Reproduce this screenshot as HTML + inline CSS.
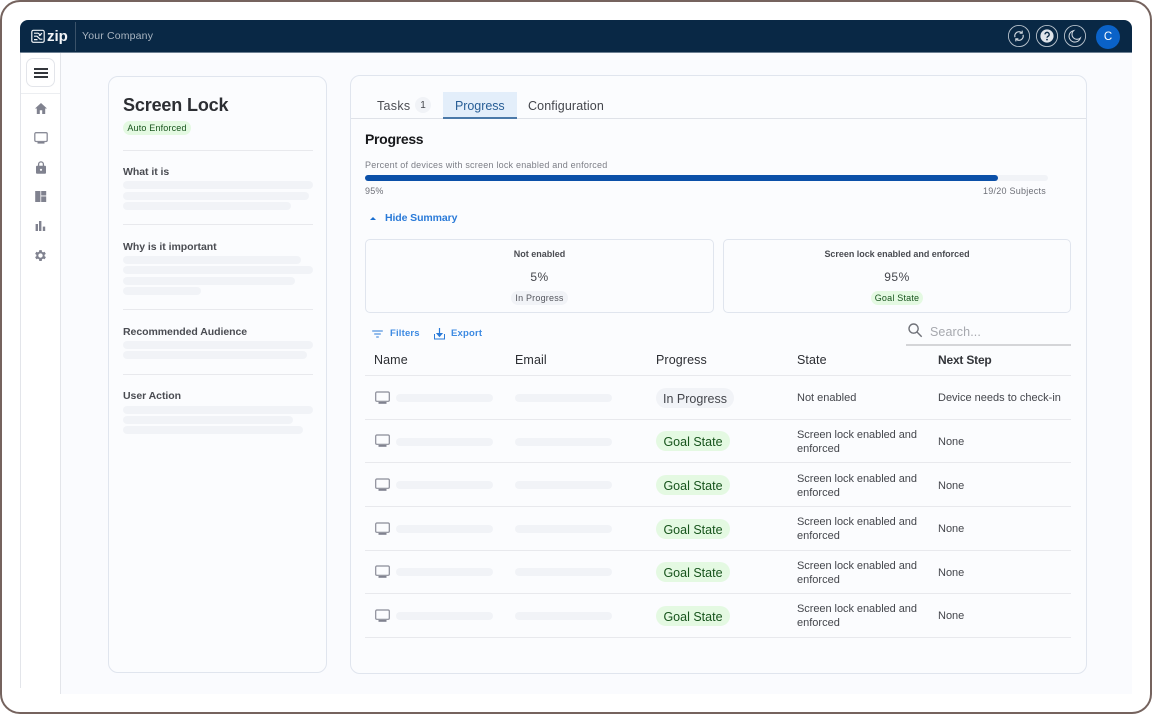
<!DOCTYPE html>
<html><head><meta charset="utf-8"><style>
*{box-sizing:border-box;margin:0;padding:0}
html,body{width:1152px;height:714px;overflow:hidden;background:#fff;font-family:"Liberation Sans",sans-serif}
div,span.t{position:absolute}
.t{position:absolute;white-space:nowrap;line-height:16px;height:16px}
.f{position:absolute;border:1px solid #e0e5ee;background:#fbfcfe}
.sk{position:absolute;height:8px;border-radius:4px;background:#f1f3f7}
.ln{position:absolute;height:1px;background:#e8e9ed}
.pill{position:absolute;border-radius:10px;text-align:center}
svg{position:absolute;display:block}
.cell{font-size:11px;color:#44464c;letter-spacing:0}
.cs{letter-spacing:-.05px}
.th{font-size:12.5px;color:#2c2e33;letter-spacing:.1px}
.gs{background:#e4f9e2;color:#17541c;font-size:12.5px;letter-spacing:0;left:656px;width:74px;height:20px;line-height:23px}
.lb{font-size:10.5px;font-weight:700;color:#4a4c52;letter-spacing:-.05px}
</style></head><body>
<div style="left:0;top:0;width:1152px;height:714px;border:2px solid #75635e;border-radius:20px;z-index:5"></div>
<div style="left:61px;top:52px;width:1071px;height:642px;background:#fafbfe"></div>
<div style="left:20px;top:53px;width:1px;height:635px;background:#e3e5ea"></div>
<div style="left:60px;top:53px;width:1px;height:641px;background:#e3e5ea"></div>
<div style="left:21px;top:93px;width:39px;height:1px;background:#eceef1"></div>

<div style="left:20px;top:20px;width:1112px;height:33px;background:#092845;border-radius:8px 8px 0 0;border-bottom:1px solid #6d8093"></div>
<svg style="left:31px;top:29px" width="14" height="15" viewBox="0 0 14 15" fill="none" stroke="#f2f5f8" stroke-width="1.2"><rect x=".8" y="1.3" width="12.4" height="12" rx="1.6"/><path d="M3 4.2h4l3 2.2M3 7.2h3l3 3h2.4M11 4.2 8 6.8M3 10.6h3.5"/></svg>
<span class="t" style="left:47px;top:29px;font-size:15px;font-weight:700;color:#f4f6f8;letter-spacing:0">zip</span>
<div style="left:75px;top:22px;width:1px;height:29px;background:#3a5269"></div>
<span class="t" style="left:82px;top:28px;font-size:10.5px;color:#a9b5c1;letter-spacing:.17px">Your Company</span>

<svg style="left:1007px;top:24px" width="24" height="24" viewBox="0 0 24 24" fill="none" stroke="#d0d7df"><circle cx="12" cy="12" r="10.6" stroke="#b9c3cd" stroke-width=".9"/><path d="M8 13.2A4.2 4.2 0 0 1 14.8 8.8M16 10.8A4.2 4.2 0 0 1 9.2 15.2" stroke-width="1.2"/><path d="M15.2 6.6v2.6h-2.6M8.8 17.4v-2.6h2.6" stroke-width="1.1"/></svg>
<svg style="left:1035px;top:24px" width="24" height="24" viewBox="0 0 24 24" fill="none"><circle cx="12" cy="12" r="10.6" stroke="#b9c3cd" stroke-width=".9"/><circle cx="12" cy="12" r="6.6" fill="#dfe4ea"/><path d="M10 10.4a2.1 2.1 0 1 1 3.2 1.8c-.8.5-1.2.8-1.2 1.5" stroke="#092845" stroke-width="1.4"/><circle cx="12" cy="15.6" r=".85" fill="#092845"/></svg>
<svg style="left:1063px;top:24px" width="24" height="24" viewBox="0 0 24 24" fill="none" stroke="#d0d7df"><circle cx="12" cy="12" r="10.6" stroke="#b9c3cd" stroke-width=".9"/><path d="M10.6 6.6A5.8 5.8 0 1 0 17.4 14 5 5 0 0 1 10.6 6.6Z" stroke-width="1.05"/></svg>
<div style="left:1096px;top:25px;width:24px;height:24px;border-radius:50%;background:#0a62c8;color:#fff;font-size:11.5px;line-height:25px;text-align:center">C</div>

<div style="left:26px;top:58px;width:29px;height:29px;border:1px solid #e3e5ea;border-radius:7px;background:#fff"></div>
<div style="left:34px;top:68px;width:14px;height:1.5px;background:#33363b"></div>
<div style="left:34px;top:72px;width:14px;height:1.5px;background:#33363b"></div>
<div style="left:34px;top:76px;width:14px;height:1.5px;background:#33363b"></div>

<svg style="left:34px;top:102px" width="14" height="13" viewBox="0 0 14 13" fill="#80828f"><path d="M7 1 1 6.5h1.8V12h3V8.2h2.4V12h3V6.5H13Z"/></svg>
<svg style="left:34px;top:131px" width="14" height="14" viewBox="0 0 14 14" fill="none"><rect x=".8" y="1.7" width="12.4" height="8.8" rx="1.2" stroke="#8a8c98" stroke-width="1.3"/><path d="M3.5 11h7v1.6h-7Z" fill="#80828f"/></svg>
<svg style="left:34px;top:160px" width="14" height="15" viewBox="0 0 14 15"><path d="M4.6 6V4.3a2.4 2.4 0 0 1 4.8 0V6" fill="none" stroke="#80828f" stroke-width="1.3"/><rect x="2" y="5.8" width="10" height="8" rx="1" fill="#80828f"/><circle cx="7" cy="9.8" r="1.1" fill="#fafbfe"/></svg>
<svg style="left:35px;top:190px" width="12" height="13" viewBox="0 0 12 13" fill="#80828f"><rect x=".2" y="1" width="5.2" height="11"/><rect x="6.2" y="1" width="5" height="4.5"/><rect x="6.2" y="6.4" width="5" height="5.6"/></svg>
<svg style="left:35px;top:220px" width="12" height="12" viewBox="0 0 12 12" fill="#80828f"><rect x=".6" y="4" width="2.4" height="7"/><rect x="4" y="1" width="2.4" height="10"/><rect x="7.8" y="6.6" width="2.4" height="4.4"/></svg>
<svg style="left:33px;top:248px" width="15" height="15" viewBox="1 0 24 24"><path fill="#80828f" d="M19.4 13a7.5 7.5 0 0 0 0-2l2.1-1.6-2-3.4-2.5 1a7.4 7.4 0 0 0-1.7-1L15 3.3h-4l-.4 2.7a7.4 7.4 0 0 0-1.7 1l-2.5-1-2 3.4L6.5 11a7.5 7.5 0 0 0 0 2l-2.1 1.6 2 3.4 2.5-1a7.4 7.4 0 0 0 1.7 1l.4 2.7h4l.4-2.7a7.4 7.4 0 0 0 1.7-1l2.5 1 2-3.4ZM13 15.5a3.5 3.5 0 1 1 0-7 3.5 3.5 0 0 1 0 7Z"/></svg>

<div class="f" style="left:108px;top:76px;width:219px;height:597px;border-radius:10px"></div>
<span class="t" style="left:123px;top:95px;font-size:18px;line-height:20px;height:20px;font-weight:700;color:#2c2e33;letter-spacing:-.15px">Screen Lock</span>
<div class="pill" style="left:123px;top:121px;width:68px;height:14px;background:#e4f9e2;color:#17541c;font-size:9px;line-height:14px;letter-spacing:.17px">Auto Enforced</div>
<div class="ln" style="left:123px;top:150px;width:190px"></div>
<span class="t lb" style="left:123px;top:164px">What it is</span>
<div class="sk" style="left:123px;top:181px;width:190px"></div>
<div class="sk" style="left:123px;top:192px;width:186px"></div>
<div class="sk" style="left:123px;top:202px;width:168px"></div>
<div class="ln" style="left:123px;top:224px;width:190px"></div>
<span class="t lb" style="left:123px;top:239px">Why is it important</span>
<div class="sk" style="left:123px;top:256px;width:178px"></div>
<div class="sk" style="left:123px;top:266px;width:190px"></div>
<div class="sk" style="left:123px;top:277px;width:172px"></div>
<div class="sk" style="left:123px;top:287px;width:78px"></div>
<div class="ln" style="left:123px;top:309px;width:190px"></div>
<span class="t lb" style="left:123px;top:324px">Recommended Audience</span>
<div class="sk" style="left:123px;top:341px;width:190px"></div>
<div class="sk" style="left:123px;top:351px;width:184px"></div>
<div class="ln" style="left:123px;top:374px;width:190px"></div>
<span class="t lb" style="left:123px;top:388px">User Action</span>
<div class="sk" style="left:123px;top:406px;width:190px"></div>
<div class="sk" style="left:123px;top:416px;width:170px"></div>
<div class="sk" style="left:123px;top:426px;width:180px"></div>

<div class="f" style="left:350px;top:75px;width:737px;height:599px;border-radius:10px"></div>
<div style="left:351px;top:118px;width:735px;height:1px;background:#dfe2e8"></div>
<span class="t" style="left:377px;top:98px;font-size:12.5px;color:#4c4e54;letter-spacing:.3px">Tasks</span>
<div style="left:415px;top:97px;width:16px;height:16px;border-radius:50%;background:#f1f3f7;color:#44464c;font-size:10px;line-height:18px;text-align:center">1</div>
<div style="left:443px;top:92px;width:74px;height:27px;background:#e3eefa;border-bottom:2px solid #4b79a8"></div>
<span class="t" style="left:455px;top:98px;font-size:12.5px;color:#285e96;letter-spacing:-.05px">Progress</span>
<span class="t" style="left:528px;top:98px;font-size:12.5px;color:#44464c;letter-spacing:.12px">Configuration</span>

<span class="t" style="left:365px;top:131px;font-size:14px;font-weight:700;color:#17181b;letter-spacing:-.3px">Progress</span>
<span class="t" style="left:365px;top:157px;font-size:9px;color:#7c7e86;letter-spacing:.22px">Percent of devices with screen lock enabled and enforced</span>
<div style="left:365px;top:175px;width:683px;height:6px;border-radius:3px;background:#f1f3f7"></div>
<div style="left:365px;top:175px;width:633px;height:6px;border-radius:3px;background:#0b50a8"></div>
<span class="t" style="left:365px;top:183px;font-size:9px;color:#6e7078;letter-spacing:.2px">95%</span>
<span class="t" style="left:983px;top:183px;font-size:9px;color:#6e7078;letter-spacing:.25px">19/20 Subjects</span>
<svg style="left:368px;top:214px" width="10" height="8" viewBox="0 0 10 8"><path d="M2 6 5 3l3 3Z" fill="#1a6fd0"/></svg>
<span class="t" style="left:385px;top:210px;font-size:10.5px;font-weight:700;color:#2a7ad8;letter-spacing:-.1px">Hide Summary</span>

<div class="f" style="left:365px;top:239px;width:349px;height:74px;border-radius:5px"></div>
<span class="t" style="left:365px;top:246px;width:349px;text-align:center;font-size:9px;font-weight:700;color:#4a4c52;letter-spacing:0">Not enabled</span>
<span class="t" style="left:365px;top:269px;width:349px;text-align:center;font-size:12px;color:#44464c;letter-spacing:.4px">5%</span>
<div class="pill" style="left:511px;top:291px;width:57px;height:14px;background:#f1f3f7;color:#55575e;font-size:9px;line-height:14px;letter-spacing:.2px">In Progress</div>

<div class="f" style="left:723px;top:239px;width:348px;height:74px;border-radius:5px"></div>
<span class="t" style="left:723px;top:246px;width:348px;text-align:center;font-size:9px;font-weight:700;color:#4a4c52;letter-spacing:-.03px">Screen lock enabled and enforced</span>
<span class="t" style="left:723px;top:269px;width:348px;text-align:center;font-size:12px;font-weight:400;color:#44464c;letter-spacing:.5px">95%</span>
<div class="pill" style="left:871px;top:291px;width:52px;height:14px;background:#e4f9e2;color:#17541c;font-size:9px;line-height:14px;letter-spacing:.2px">Goal State</div>

<svg style="left:372px;top:330px" width="11" height="8" viewBox="0 0 11 8" fill="none" stroke="#2a7ad8" stroke-width="1"><path d="M.2 1h10.6M2.2 4h6.6M4.2 7h2.6"/></svg>
<span class="t" style="left:390px;top:326px;font-size:9.5px;font-weight:700;color:#3d8ae2;letter-spacing:.18px">Filters</span>
<svg style="left:434px;top:328px" width="11" height="12" viewBox="0 0 11 12" fill="none" stroke="#2a7ad8" stroke-width="1"><path d="M.5 6v5h10V6"/><path d="M5.5 0v6.5" stroke-width="1.2"/><path d="M3 5.5 5.5 8.5 8 5.5Z" fill="#2a7ad8"/></svg>
<span class="t" style="left:451px;top:326px;font-size:9.5px;font-weight:700;color:#3d8ae2;letter-spacing:.2px">Export</span>

<svg style="left:907px;top:322px" width="16" height="16" viewBox="0 0 16 16" fill="none" stroke="#6f7178" stroke-width="1.4"><circle cx="6.6" cy="6.6" r="4.6"/><path d="m10 10 4.7 4.7"/></svg>
<span class="t" style="left:930px;top:324px;font-size:12.5px;color:#a6a8ae;letter-spacing:.1px">Search...</span>
<div style="left:906px;top:344px;width:165px;height:2px;background:#d4d5d8"></div>

<span class="t th" style="left:374px;top:352px">Name</span>
<span class="t th" style="left:515px;top:352px">Email</span>
<span class="t th" style="left:656px;top:352px">Progress</span>
<span class="t th" style="left:797px;top:352px">State</span>
<span class="t th" style="left:938px;top:352px;font-size:12px;font-weight:700;letter-spacing:-.2px;color:#33353a">Next Step</span>

<div class="ln" style="left:365px;top:375px;width:706px"></div>
<div class="ln" style="left:365px;top:419px;width:706px"></div>
<div class="ln" style="left:365px;top:462px;width:706px"></div>
<div class="ln" style="left:365px;top:506px;width:706px"></div>
<div class="ln" style="left:365px;top:550px;width:706px"></div>
<div class="ln" style="left:365px;top:593px;width:706px"></div>
<div class="ln" style="left:365px;top:637px;width:706px"></div>

<svg style="left:375px;top:391px" width="15" height="14" viewBox="0 0 15 14" fill="none"><rect x=".7" y="1" width="13.6" height="9.3" rx="1.2" stroke="#8a8c98" stroke-width="1.2"/><path d="M3.5 11h8v1.8h-8Z" fill="#80828f"/></svg>
<svg style="left:375px;top:434px" width="15" height="14" viewBox="0 0 15 14" fill="none"><rect x=".7" y="1" width="13.6" height="9.3" rx="1.2" stroke="#8a8c98" stroke-width="1.2"/><path d="M3.5 11h8v1.8h-8Z" fill="#80828f"/></svg>
<svg style="left:375px;top:478px" width="15" height="14" viewBox="0 0 15 14" fill="none"><rect x=".7" y="1" width="13.6" height="9.3" rx="1.2" stroke="#8a8c98" stroke-width="1.2"/><path d="M3.5 11h8v1.8h-8Z" fill="#80828f"/></svg>
<svg style="left:375px;top:522px" width="15" height="14" viewBox="0 0 15 14" fill="none"><rect x=".7" y="1" width="13.6" height="9.3" rx="1.2" stroke="#8a8c98" stroke-width="1.2"/><path d="M3.5 11h8v1.8h-8Z" fill="#80828f"/></svg>
<svg style="left:375px;top:565px" width="15" height="14" viewBox="0 0 15 14" fill="none"><rect x=".7" y="1" width="13.6" height="9.3" rx="1.2" stroke="#8a8c98" stroke-width="1.2"/><path d="M3.5 11h8v1.8h-8Z" fill="#80828f"/></svg>
<svg style="left:375px;top:609px" width="15" height="14" viewBox="0 0 15 14" fill="none"><rect x=".7" y="1" width="13.6" height="9.3" rx="1.2" stroke="#8a8c98" stroke-width="1.2"/><path d="M3.5 11h8v1.8h-8Z" fill="#80828f"/></svg>

<div class="sk" style="left:396px;top:394px;width:97px"></div><div class="sk" style="left:515px;top:394px;width:97px"></div>
<div class="sk" style="left:396px;top:438px;width:97px"></div><div class="sk" style="left:515px;top:438px;width:97px"></div>
<div class="sk" style="left:396px;top:481px;width:97px"></div><div class="sk" style="left:515px;top:481px;width:97px"></div>
<div class="sk" style="left:396px;top:525px;width:97px"></div><div class="sk" style="left:515px;top:525px;width:97px"></div>
<div class="sk" style="left:396px;top:568px;width:97px"></div><div class="sk" style="left:515px;top:568px;width:97px"></div>
<div class="sk" style="left:396px;top:612px;width:97px"></div><div class="sk" style="left:515px;top:612px;width:97px"></div>

<div class="pill" style="left:656px;top:388px;width:78px;height:20px;background:#f1f3f7;color:#44464c;font-size:12.5px;letter-spacing:0;line-height:23px">In Progress</div>
<div class="pill gs" style="top:431px">Goal State</div>
<div class="pill gs" style="top:475px">Goal State</div>
<div class="pill gs" style="top:519px">Goal State</div>
<div class="pill gs" style="top:562px">Goal State</div>
<div class="pill gs" style="top:606px">Goal State</div>

<span class="t cell" style="left:797px;top:390px">Not enabled</span>
<span class="t cell" style="left:938px;top:390px">Device needs to check-in</span>
<span class="t cell cs" style="left:797px;top:427px">Screen lock enabled and</span><span class="t cell" style="left:797px;top:441px">enforced</span><span class="t cell" style="left:938px;top:434px">None</span>
<span class="t cell cs" style="left:797px;top:471px">Screen lock enabled and</span><span class="t cell" style="left:797px;top:485px">enforced</span><span class="t cell" style="left:938px;top:478px">None</span>
<span class="t cell cs" style="left:797px;top:514px">Screen lock enabled and</span><span class="t cell" style="left:797px;top:528px">enforced</span><span class="t cell" style="left:938px;top:521px">None</span>
<span class="t cell cs" style="left:797px;top:558px">Screen lock enabled and</span><span class="t cell" style="left:797px;top:572px">enforced</span><span class="t cell" style="left:938px;top:565px">None</span>
<span class="t cell cs" style="left:797px;top:601px">Screen lock enabled and</span><span class="t cell" style="left:797px;top:615px">enforced</span><span class="t cell" style="left:938px;top:608px">None</span>
</body></html>
